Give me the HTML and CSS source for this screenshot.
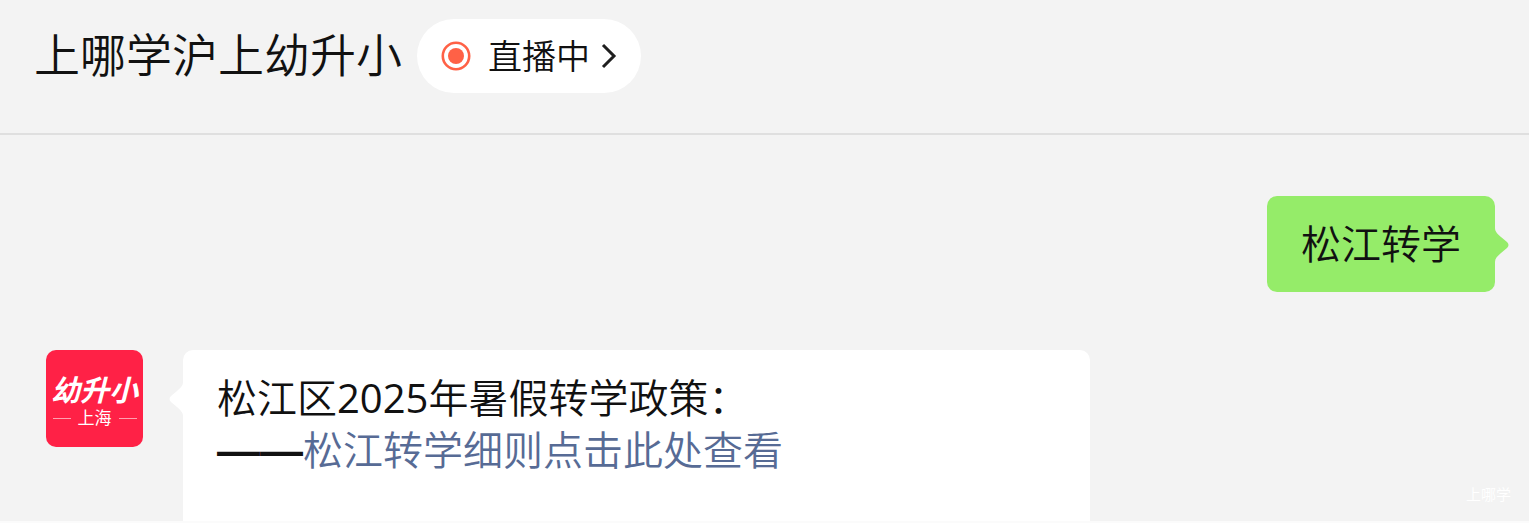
FILE: index.html
```html
<!DOCTYPE html>
<html lang="zh-CN">
<head>
    <meta charset="UTF-8">
    <meta name="viewport" content="width=device-width, initial-scale=1.0">
    <title>上哪学沪上幼升小</title>
    <link rel="stylesheet" href="styles.css">
</head>
<body>

<!-- Header -->
<header class="header">
    <h1>上哪学沪上幼升小</h1>
    <button type="button" class="live">
        <svg class="live-dot" viewBox="0 0 30 30" aria-hidden="true">
            <circle cx="15" cy="15" r="13.2" fill="none" stroke="#ff6146" stroke-width="2.6"/>
            <circle cx="15" cy="15" r="8" fill="#ff6146"/>
        </svg>
        <span>直播中</span>
        <svg class="live-arrow" viewBox="0 0 16 26" aria-hidden="true">
            <path d="M2 2 L13 13 L2 24" fill="none" stroke="#1f1f1f" stroke-width="3"/>
        </svg>
    </button>
</header>

<!-- Chat -->
<main class="chat">
    <div class="message sent">
        <div class="bubble">
            <p>松江转学</p>
            <svg class="tail" viewBox="0 0 14 34" aria-hidden="true">
                <path d="M0 0 C0 4 3 6 6 9 L12 14 Q15 17 12 20 L6 25 C3 28 0 30 0 34 Z"/>
            </svg>
        </div>
    </div>

    <div class="message received">
        <div class="avatar">
            <span class="avatar-name">幼升小</span>
            <span class="avatar-city">上海</span>
        </div>
        <div class="bubble">
            <svg class="tail" viewBox="0 0 14 34" aria-hidden="true">
                <path d="M14 0 C14 4 11 6 8 9 L2 14 Q-1 17 2 20 L8 25 C11 28 14 30 14 34 Z"/>
            </svg>
            <p>松江区<span class="year">2025</span>年暑假转学政策：</p>
            <p><span class="dash">——</span><a href="#">松江转学细则点击此处查看</a></p>
        </div>
    </div>
</main>

<span class="watermark">上哪学</span>

</body>
</html>
```

FILE: styles.css
```css
/* Global Styles */
* {
    box-sizing: border-box;
}

body {
    font-family: 'Open Sans', 'Noto Sans CJK SC', sans-serif;
    font-weight: 350;
    background-color: #f3f3f3;
    margin: 0;
    min-height: 100vh;
    display: flex;
    flex-direction: column;
    position: relative;
    color: #111;
    border-bottom: 2px solid #fbfbfb;
}

h1, p {
    margin: 0;
    font-weight: inherit;
}

/* Header */
.header {
    display: flex;
    align-items: flex-start;
    gap: 15px;
    padding: 19px 34px 40px;
    border-bottom: 2px solid #dfdfdf;
}

.header h1 {
    font-size: 46px;
    line-height: 70px;
}

.live {
    display: flex;
    align-items: center;
    height: 74px;
    padding: 0 24px;
    border: none;
    border-radius: 37px;
    background-color: #fff;
    color: #111;
    font: inherit;
    font-size: 34px;
    line-height: 46px;
    cursor: pointer;
}

.live-dot {
    width: 30px;
    height: 30px;
    margin-right: 17px;
}

.live-arrow {
    width: 16px;
    height: 26px;
    margin-left: 11px;
}

/* Chat */
.chat {
    flex: 1;
    display: flex;
    flex-direction: column;
    gap: 58px;
    padding-top: 61px;
}

.message {
    display: flex;
    align-items: flex-start;
    font-size: 40px;
    line-height: 52px;
}

.bubble {
    position: relative;
    border-radius: 10px;
    padding: 22px 34px;
}

.tail {
    position: absolute;
    top: 32px;
    width: 14px;
    height: 34px;
}

.sent {
    justify-content: flex-end;
    padding-right: 34px;
}

.sent .bubble {
    background-color: #95ec69;
}

.sent .tail {
    left: 100%;
    fill: #95ec69;
}

.received {
    flex: 1;
    gap: 40px;
    padding: 0 439px 0 46px;
}

.received .bubble {
    flex: 1;
    align-self: stretch;
    border-radius: 10px 10px 0 0;
    background-color: #fff;
}

.received .tail {
    right: 100%;
    fill: #fff;
}

.received a {
    color: #576b95;
    text-decoration: none;
}

.year {
    font-weight: 400;
}

.dash {
    font-family: 'Liberation Sans', sans-serif;
    font-size: 43px;
    font-weight: 700;
    line-height: 1;
}

/* Avatar */
.avatar {
    display: flex;
    flex-direction: column;
    align-items: center;
    width: 97px;
    height: 97px;
    padding-top: 24px;
    border-radius: 10px;
    background-color: #ff2146;
    color: #fff;
}

.avatar-name {
    font-size: 29px;
    font-weight: 700;
    font-style: italic;
    line-height: 32px;
}

.avatar-city {
    display: flex;
    align-items: center;
    gap: 7px;
    font-size: 17px;
    font-weight: 400;
    line-height: 24px;
}

.avatar-city::before,
.avatar-city::after {
    content: "";
    width: 18px;
    height: 1px;
    background-color: #ffa0b0;
}

.watermark {
    position: absolute;
    right: 18px;
    bottom: 17px;
    color: #fff;
    font-size: 15px;
    line-height: 20px;
}
```
